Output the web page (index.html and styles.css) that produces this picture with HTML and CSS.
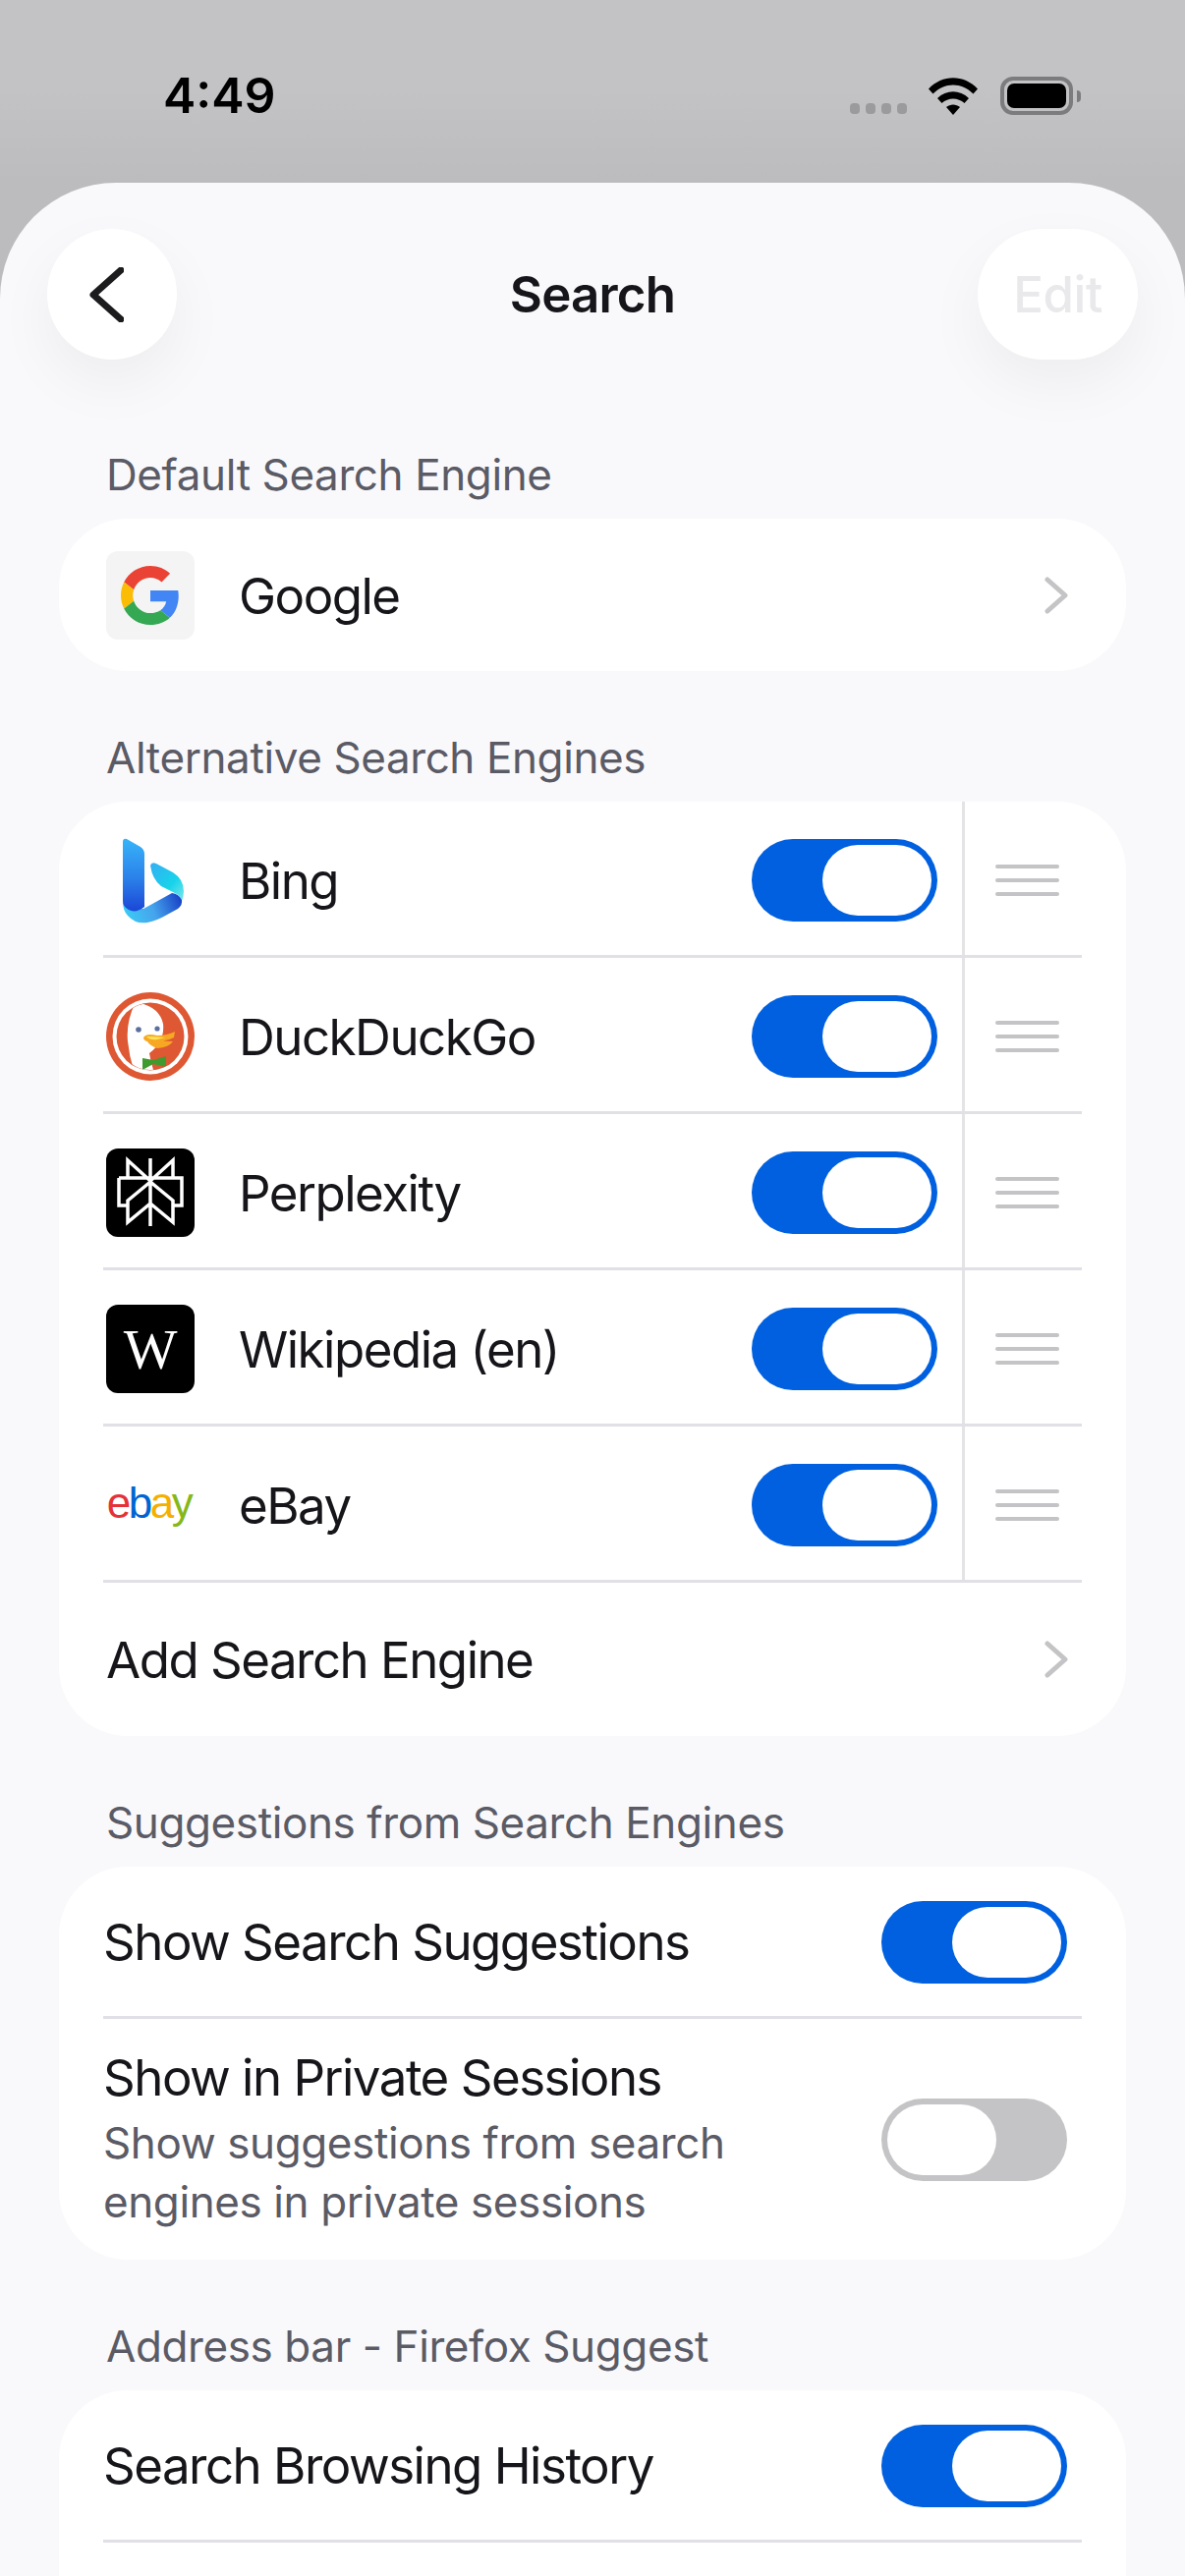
FILE: index.html
```html
<!DOCTYPE html>
<html lang="en">
<head>
  <meta charset="UTF-8" />
  <title>Search</title>
  <link rel="stylesheet" href="styles.css">
</head>
<body>
  <div class="phone">

    <!-- Status bar -->
    <div class="status-bar">
      <div class="time">4:49</div>
      <div class="status-icons">
        <div class="signal"><i></i><i></i><i></i><i></i></div>
        <svg class="wifi" width="50" height="38" viewBox="0 0 50 38">
          <path d="M0 11.5 C14 -3.5 36 -3.5 50 11.5 L45.5 16.5 C33.5 4.5 16.5 4.5 4.500 16.5 Z" />
          <path d="M9 21 C18 12 32 12 41 21 L36.500 26 C30 20 20 20 13.500 26 Z" />
          <path d="M18 30 C22 26.500 28 26.500 32 30 L25 38 Z" />
        </svg>
        <div class="battery"><div class="battery-fill"></div></div>
        <div class="battery-cap"></div>
      </div>
    </div>

    <div class="sheet">
      <!-- Nav -->
      <div class="nav">
        <div class="back-btn">
          <svg width="36" height="56" viewBox="0 0 36 56"><path d="M33 3 L5 28 L33 53" class="back-arrow" /></svg>
        </div>
        <div class="nav-title">Search</div>
        <div class="edit-btn">Edit</div>
      </div>

      <!-- Default engine -->
      <div class="section first">
        <div class="section-label">Default Search Engine</div>
        <div class="card">
          <div class="row-default">
            <div class="icon icon-google">
              <svg width="60" height="60" viewBox="0 0 48 48">
                <path fill="#EA4335" d="M24 9.500c3.540 0 6.710 1.220 9.210 3.600l6.850-6.850C35.900 2.380 30.470 0 24 0 14.620 0 6.510 5.380 2.560 13.220l7.980 6.190C12.430 13.720 17.740 9.500 24 9.500z" />
                <path fill="#4285F4" d="M46.980 24.550c0-1.570-.15-3.090-.38-4.550H24v9.020h12.940c-.58 2.960-2.260 5.480-4.780 7.180l7.730 6c4.510-4.180 7.090-10.360 7.090-17.650z" />
                <path fill="#FBBC05" d="M10.530 28.590c-.5-1.450-.78-2.990-.78-4.590s.27-3.140.78-4.590l-7.980-6.190C.92 16.460 0 20.120 0 24c0 3.880.92 7.540 2.560 10.780l7.970-6.190z" />
                <path fill="#34A853" d="M24 48c6.480 0 11.930-2.130 15.890-5.810l-7.730-6c-2.150 1.450-4.920 2.300-8.160 2.300-6.260 0-11.570-4.220-13.470-9.910l-7.980 6.190C6.510 42.620 14.620 48 24 48z" />
              </svg>
            </div>
            <div class="name">Google</div>
            <svg class="chevron" width="26" height="38" viewBox="0 0 26 38"><path d="M4 3 L22 19 L4 35" /></svg>
          </div>
        </div>
      </div>

      <!-- Alternative engines -->
      <div class="section">
        <div class="section-label">Alternative Search Engines</div>
        <div class="card">
          <div class="row-engine">
            <div class="engine-main">
              <div class="icon">
                <svg width="90" height="90" viewBox="0 0 90 90">
                  <defs>
                    <linearGradient id="bingStem" x1="0" y1="0" x2="0" y2="1"><stop offset="0" stop-color="#37b4f9" /><stop offset="0.55" stop-color="#2b80ea" /><stop offset="1" stop-color="#1b46d6" /></linearGradient>
                    <linearGradient id="bingRibbon" x1="0" y1="0.6" x2="1" y2="0.4"><stop offset="0" stop-color="#3ccbf6" /><stop offset="0.5" stop-color="#45a4ec" /><stop offset="1" stop-color="#1a47c8" /></linearGradient>
                    <linearGradient id="bingLeaf" x1="0" y1="0" x2="1" y2="1"><stop offset="0" stop-color="#36aef3" /><stop offset="0.6" stop-color="#18d3ea" /><stop offset="1" stop-color="#7fe8ea" /></linearGradient>
                  </defs>
                  <path fill="url(#bingLeaf)" d="M45 30 Q46 26 51 28 L68 37 Q79 44 79 56 Q79 62 77 66 Q75 60 68 57 L56 51 Q47 44 45 30 Z" />
                  <path fill="url(#bingRibbon)" d="M17 66 Q17 76 22 81 Q30 90 42 88 Q52 86 62 80 L73 74 Q78 70 77 65 Q74 59 67 58 L38 74 L22 74 Z" />
                  <path fill="url(#bingStem)" d="M17 6 Q17 2 21 3 L35 11 Q39 14 39 18 L39 72 Q30 79 23 75 Q17 72 17 66 Z" />
                </svg>
              </div>
              <div class="name">Bing</div>
              <div class="toggle on"><div class="thumb"></div></div>
            </div>
            <div class="handle"><i></i><i></i><i></i></div>
          </div>
          <div class="row-engine">
            <div class="engine-main">
              <div class="icon">
                <svg width="90" height="90" viewBox="0 0 90 90">
                  <defs><clipPath id="duckClip"><circle cx="45" cy="45" r="34" /></clipPath></defs>
                  <circle cx="45" cy="45" r="45" fill="#de5833" />
                  <circle cx="45" cy="45" r="38.500" fill="#fff" />
                  <circle cx="45" cy="45" r="34.500" fill="#de5833" />
                  <g clip-path="url(#duckClip)">
                    <path fill="#fff" d="M30 10 Q20 30 22 50 Q24 70 32 90 L52 90 Q46 75 44 62 Q60 50 58 32 Q54 14 30 10 Z" />
                    <path fill="#3f9b2d" d="M37 67 L48 69 L61 65 L61 76 L48 73 L37 79 Z" />
                  </g>
                  <circle cx="33" cy="38" r="2.800" fill="#5a6f9e" />
                  <circle cx="52" cy="37" r="2.600" fill="#5a6f9e" />
                  <path fill="#f7a823" d="M38 46 Q41 41 52 44 Q62 44 70 40 L69 46 Q62 50 56 49 Q62 50 68 50 Q64 56 52 57 Q44 54 42 50 Q38 49 38 46 Z" />
                  <path fill="#fde25a" d="M41 45 Q50 45 60 46 L52 48 Q45 49 41 45 Z" />
                </svg>
              </div>
              <div class="name">DuckDuckGo</div>
              <div class="toggle on"><div class="thumb"></div></div>
            </div>
            <div class="handle"><i></i><i></i><i></i></div>
          </div>
          <div class="row-engine">
            <div class="engine-main">
              <div class="icon icon-black">
                <svg width="90" height="90" viewBox="0 0 90 90">
                  <path class="perplexity" d="M45 10 V79 M22 12 L45 33 L68 12 V30 H22 Z M13 30 H77 V58 H68 M13 30 V58 H22 M45 34 L22 53 V75 L45 56 L68 75 V53 Z" />
                </svg>
              </div>
              <div class="name">Perplexity</div>
              <div class="toggle on"><div class="thumb"></div></div>
            </div>
            <div class="handle"><i></i><i></i><i></i></div>
          </div>
          <div class="row-engine">
            <div class="engine-main">
              <div class="icon icon-black wiki">W</div>
              <div class="name">Wikipedia (en)</div>
              <div class="toggle on"><div class="thumb"></div></div>
            </div>
            <div class="handle"><i></i><i></i><i></i></div>
          </div>
          <div class="row-engine">
            <div class="engine-main">
              <div class="icon ebay"><span class="e-red">e</span><span class="e-blue">b</span><span class="e-yellow">a</span><span class="e-green">y</span></div>
              <div class="name">eBay</div>
              <div class="toggle on"><div class="thumb"></div></div>
            </div>
            <div class="handle"><i></i><i></i><i></i></div>
          </div>
          <div class="row-add">
            <div class="name-plain">Add Search Engine</div>
            <svg class="chevron" width="26" height="38" viewBox="0 0 26 38"><path d="M4 3 L22 19 L4 35" /></svg>
          </div>
        </div>
      </div>

      <!-- Suggestions -->
      <div class="section">
        <div class="section-label">Suggestions from Search Engines</div>
        <div class="card">
          <div class="row-setting">
            <div class="setting-title">Show Search Suggestions</div>
            <div class="toggle on"><div class="thumb"></div></div>
          </div>
          <div class="row-setting tall">
            <div class="setting-text">
              <div class="setting-title">Show in Private Sessions</div>
              <div class="setting-sub">Show suggestions from search<br>engines in private sessions</div>
            </div>
            <div class="toggle off"><div class="thumb"></div></div>
          </div>
        </div>
      </div>

      <!-- Firefox Suggest -->
      <div class="section">
        <div class="section-label">Address bar - Firefox Suggest</div>
        <div class="card">
          <div class="row-setting">
            <div class="setting-title">Search Browsing History</div>
            <div class="toggle on"><div class="thumb"></div></div>
          </div>
          <div class="row-setting"></div>
        </div>
      </div>
    </div>
  </div>
</body>
</html>
```

FILE: styles.css
```css
* {
  margin: 0;
  padding: 0;
  box-sizing: border-box;
}

html, body {
  height: 100%;
  overflow: hidden;
  font-family: 'Inter', 'Liberation Sans', sans-serif;
}

body {
  background: #c2c2c4;
  color: #15151a;
}

.phone {
  width: 1206px;
  height: 2622px;
  overflow: hidden;
  background: linear-gradient(#c3c3c5, #c3c3c5 90px, #bcbcbe 186px);
}

/* Status bar */
.status-bar {
  height: 186px;
  display: flex;
  justify-content: space-between;
  padding: 69px 106px 0 166px;
}

.time {
  font-size: 50px;
  line-height: 56px;
  font-weight: 600;
  color: #000;
}

.status-icons {
  display: flex;
  align-items: flex-start;
  padding-top: 9px;
}

.signal {
  display: flex;
  gap: 6px;
  margin-top: 27px;
  margin-right: 22px;
}

.signal i {
  width: 10px;
  height: 11px;
  border-radius: 4px;
  background: #9b9b9d;
}

.wifi {
  fill: #000;
  margin-top: 1px;
  margin-right: 23px;
}

.battery {
  width: 74px;
  height: 39px;
  border: 4px solid #7c7c7e;
  border-radius: 13px;
  padding: 3px;
}

.battery-fill {
  height: 100%;
  background: #000;
  border-radius: 7px;
}

.battery-cap {
  width: 4px;
  height: 12px;
  margin-top: 14px;
  margin-left: 4px;
  background: #7c7c7e;
  border-radius: 0 4px 4px 0;
}

/* Sheet */
.sheet {
  background: #f9f9fb;
  border-radius: 118px 118px 0 0;
  height: 2436px;
  overflow: hidden;
}

.nav {
  display: grid;
  grid-template-columns: 1fr auto 1fr;
  align-items: center;
  padding: 47px 48px 0;
}

.back-btn,
.edit-btn {
  height: 133px;
  background: #fff;
  border-radius: 67px;
  box-shadow: 0 24px 60px rgba(0, 0, 0, 0.05);
  display: flex;
  align-items: center;
  justify-content: center;
}

.back-btn {
  width: 132px;
}

.back-btn svg {
  margin-right: 12px;
}

.back-arrow {
  fill: none;
  stroke: #1c1c1e;
  stroke-width: 7;
  stroke-linecap: round;
  stroke-linejoin: round;
}

.edit-btn {
  width: 163px;
  justify-self: end;
  font-size: 51px;
  font-weight: 500;
  letter-spacing: -0.5px;
  color: #e9e9eb;
}

.nav-title {
  font-size: 51px;
  font-weight: 600;
  letter-spacing: -0.8px;
}

.section {
  margin: 58px 60px 0;
}

.section.first {
  margin-top: 87px;
}

.section-label {
  font-size: 44px;
  line-height: 60px;
  letter-spacing: -0.4px;
  color: #5b5b66;
  padding-left: 48px;
  margin-bottom: 15px;
}

.card {
  background: #fff;
  border-radius: 70px;
  overflow: hidden;
}

/* Rows */
.row-default,
.row-add {
  display: flex;
  align-items: center;
}

.row-default {
  height: 155px;
  padding: 1px 58px 0 48px;
}

.row-add {
  height: 156px;
  padding: 0 58px 0 48px;
}

.icon {
  width: 90px;
  height: 90px;
  flex-shrink: 0;
  display: flex;
  align-items: center;
  justify-content: center;
  border-radius: 12px;
}

.icon-google {
  background: #f4f4f4;
}

.icon-black {
  background: #000;
}

.perplexity {
  fill: none;
  stroke: #fff;
  stroke-width: 3.5;
}

.wiki {
  color: #fff;
  font-family: 'Liberation Serif', serif;
  font-size: 58px;
}

.ebay {
  font-family: 'Liberation Sans', sans-serif;
  font-size: 44px;
  letter-spacing: -2.5px;
  padding: 0 3px 4px 0;
}

.e-red { color: #e53238; }
.e-blue { color: #0064d2; }
.e-yellow { color: #f5af02; }
.e-green { color: #86b817; }

.name {
  flex: 1;
  margin-left: 45px;
  font-size: 51px;
  letter-spacing: -1.5px;
}

.name-plain {
  flex: 1;
  font-size: 51px;
  letter-spacing: -1.5px;
}

.chevron {
  fill: none;
  stroke: #c4c4c6;
  stroke-width: 5;
  stroke-linecap: round;
  stroke-linejoin: round;
}

.row-engine {
  display: flex;
  height: 159px;
  margin: 0 45px;
  border-bottom: 3px solid #e0e0e6;
}

.engine-main {
  flex: 1;
  display: flex;
  align-items: center;
  padding: 4px 25px 0 3px;
}

.handle {
  width: 122px;
  border-left: 3px solid #e4e4e6;
  padding: 3px 0 0 31px;
  display: flex;
  flex-direction: column;
  justify-content: center;
  gap: 10px;
}

.handle i {
  width: 65px;
  height: 4px;
  border-radius: 2px;
  background: #c4c4c6;
}

.toggle {
  width: 189px;
  height: 84px;
  border-radius: 42px;
  padding: 6px;
  display: flex;
  flex-shrink: 0;
}

.toggle.on {
  background: #0060df;
  justify-content: flex-end;
}

.toggle.off {
  background: #c4c4c6;
  justify-content: flex-start;
}

.thumb {
  width: 111px;
  height: 72px;
  border-radius: 36px;
  background: #fff;
}

.row-setting {
  display: flex;
  align-items: center;
  justify-content: space-between;
  height: 155px;
  margin: 0 45px;
  padding: 2px 15px 0 0;
  border-bottom: 3px solid #e0e0e6;
}

.row-setting.tall {
  height: 245px;
  padding-top: 0;
  border-bottom: 0;
}

.setting-title {
  font-size: 51px;
  line-height: 60px;
  letter-spacing: -1.5px;
}

.setting-sub {
  font-size: 44px;
  line-height: 60px;
  letter-spacing: -0.4px;
  margin-top: 6px;
  color: #5b5b66;
}
```
